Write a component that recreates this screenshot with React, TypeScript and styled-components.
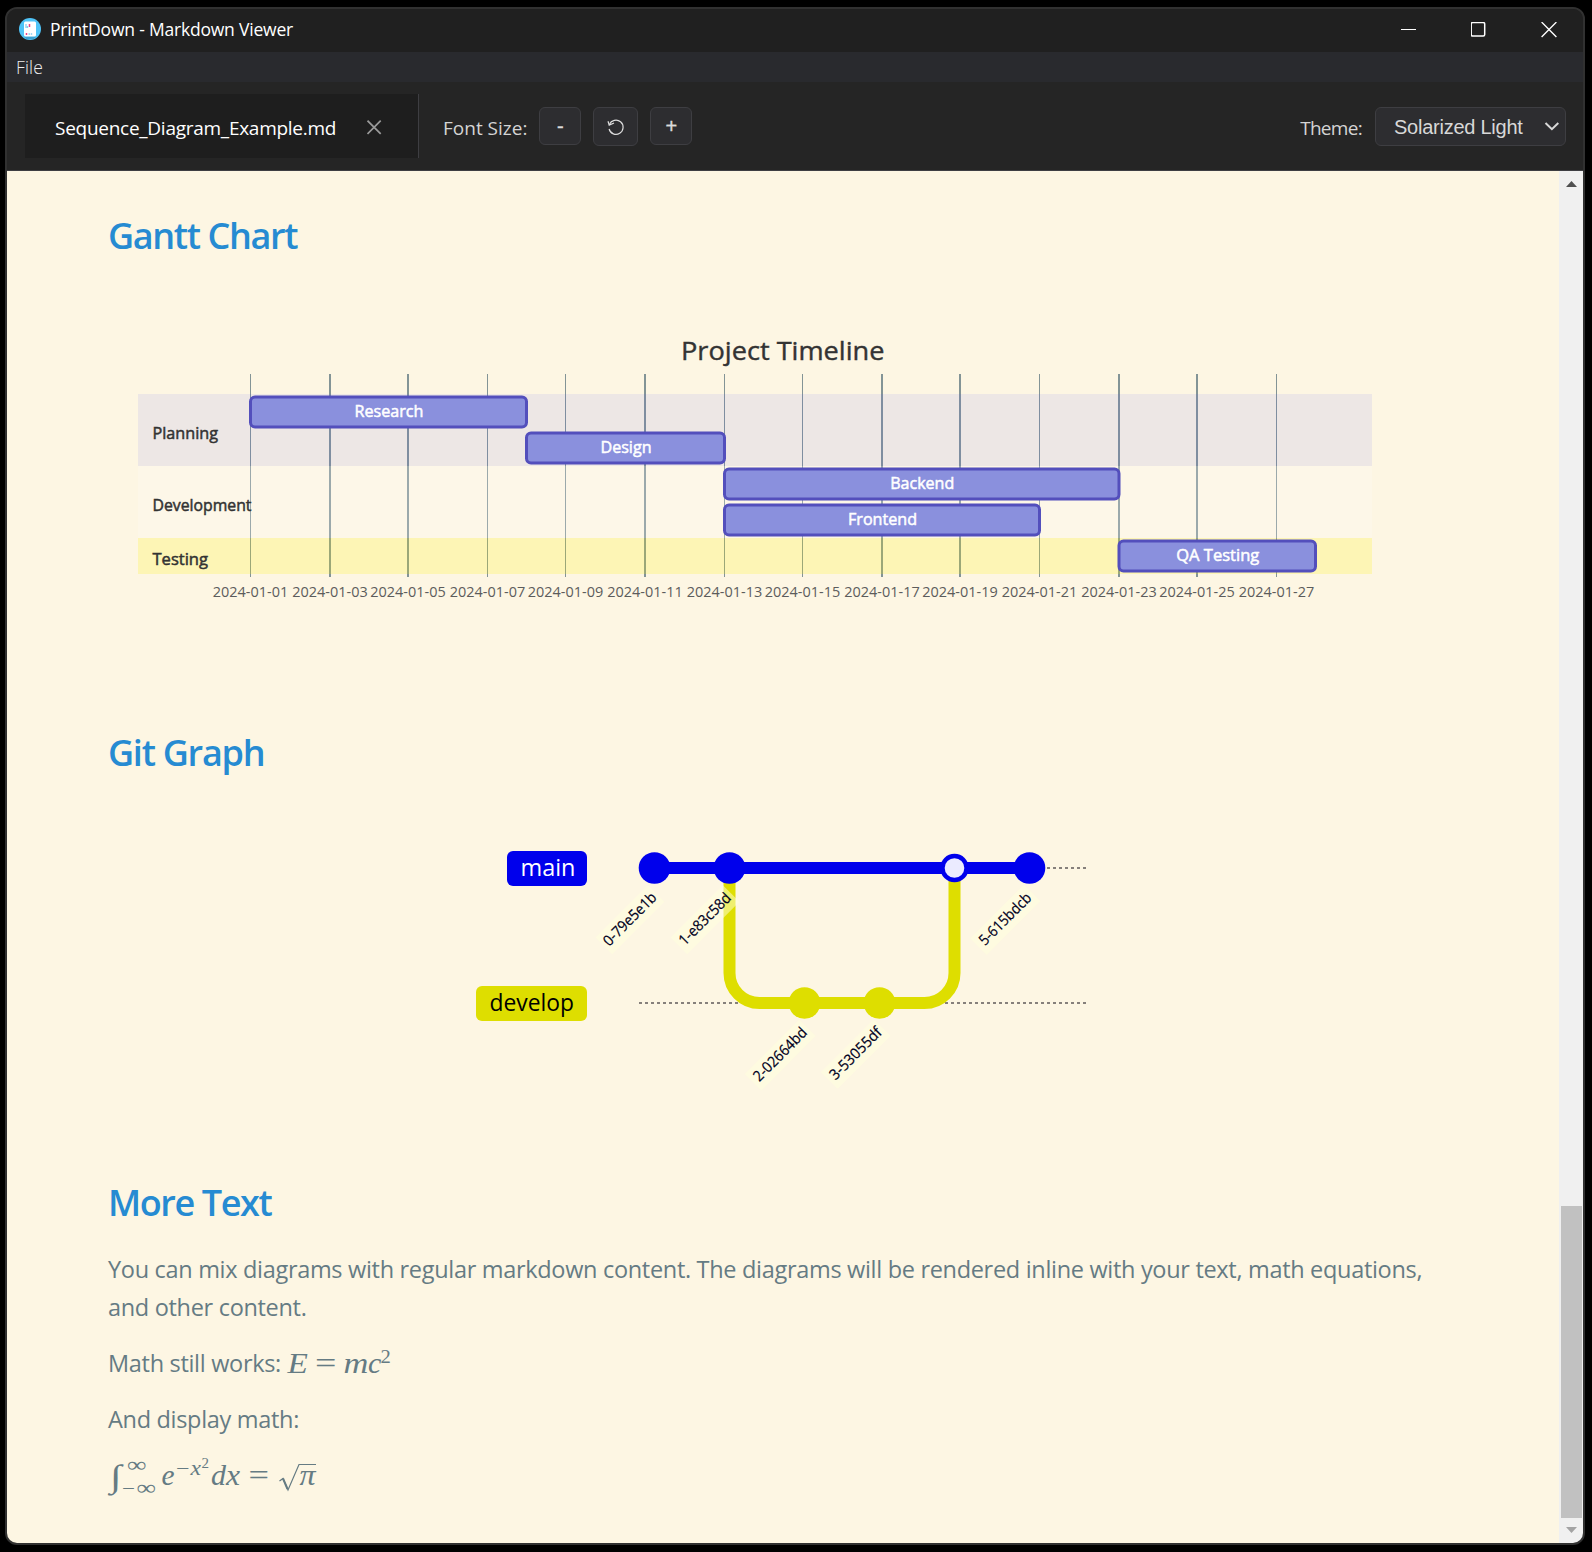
import React from 'react';
import styled, { createGlobalStyle } from 'styled-components';

const UI = '"Open Sans", "Noto Sans", sans-serif';
const MATH = '"Liberation Serif", serif';

const GlobalStyle = createGlobalStyle`
  * { box-sizing: border-box; }
  body { margin: 0; background: #000; font-family: ${UI}; }
`;

const Desktop = styled.div`
  width: 1592px;
  height: 1552px;
  padding: 7px 7px 7px 5px;
  background: #000;
  overflow: hidden;
`;

const AppWindow = styled.div`
  display: flex;
  flex-direction: column;
  width: 1580px;
  height: 1538px;
  border: 2px solid #313131;
  border-radius: 12px;
  overflow: hidden;
  background: #202020;
`;

const TitleBar = styled.header`
  display: flex;
  align-items: center;
  flex: none;
  height: 43px;
  padding: 0 26px 3px 12px;
  background: #202020;
`;

const AppTitle = styled.span`
  flex: 1;
  margin-left: 9px;
  color: #fff;
  font-size: 17.5px;
  line-height: 24px;
  letter-spacing: -0.2px;
`;

const WindowControls = styled.div`
  display: flex;
  align-items: center;
  gap: 54px;
  padding-top: 2px;
`;

const MenuBar = styled.nav`
  display: flex;
  align-items: center;
  flex: none;
  height: 30px;
  padding: 0 9px 1px;
  background: #292a2e;
`;

const MenuItem = styled.span`
  color: #eee;
  font-size: 17.5px;
  font-weight: 300;
  letter-spacing: 0.15px;
`;

const Toolbar = styled.div`
  display: flex;
  align-items: center;
  flex: none;
  height: 89px;
  padding: 0 17px 1px 18px;
  background: #252525;
  border-bottom: 1px solid #3e3e42;
`;

const Tab = styled.div`
  display: flex;
  align-items: center;
  width: 394px;
  height: 64px;
  padding-left: 30px;
  background: #1e1e1e;
  border-right: 1px solid #3e3e42;

  svg { margin-top: 3px; }
`;

const TabName = styled.span`
  width: 312px;
  padding-top: 4px;
  color: #fff;
  font-size: 19px;
  line-height: 26px;
  letter-spacing: -0.27px;
`;

const ToolLabel = styled.span<{ $tracking: number }>`
  padding-top: 4px;
  color: #d4d4d4;
  font-size: 19px;
  line-height: 26px;
  letter-spacing: ${(p) => p.$tracking}px;
`;

const FontControls = styled.div`
  display: flex;
  align-items: center;
  gap: 12px;
  flex: 1;
  margin-left: 24px;
`;

const ToolButton = styled.button<{ $width: number; $height: number }>`
  display: flex;
  align-items: center;
  justify-content: center;
  width: ${(p) => p.$width}px;
  height: ${(p) => p.$height}px;
  margin-top: ${(p) => p.$height - 38}px;
  padding: 2px 0 0;
  border: 1px solid #3e3e42;
  border-radius: 6px;
  background: #2d2d30;
  color: #dcdcdc;
  font: 500 20px "Liberation Sans", Arial, sans-serif;
  -webkit-text-stroke: 0.4px #dcdcdc;
`;

const ThemeControls = styled.div`
  display: flex;
  align-items: center;
  gap: 13px;
`;

const ThemeSelect = styled.div`
  display: flex;
  align-items: center;
  justify-content: space-between;
  width: 191px;
  height: 39px;
  margin-top: 1px;
  padding: 2px 6px 0 18px;
  border: 1px solid #3e3e42;
  border-radius: 6px;
  background: #2d2d30;
  color: #d8d8d8;
  font: 20px "Liberation Sans", Arial, sans-serif;
  letter-spacing: -0.25px;
`;

const Viewer = styled.div`
  display: flex;
  flex: 1;
  min-height: 0;
`;

const Page = styled.main`
  flex: 1;
  padding: 41px 0 0 101px;
  background: #fdf6e3;
  color: #657b83;
`;

const Heading = styled.h2<{ $tracking: number }>`
  margin: 0;
  color: #268bd2;
  font-size: 36px;
  font-weight: 600;
  line-height: 48px;
  letter-spacing: ${(p) => p.$tracking}px;
`;

const Diagram = styled.svg<{ $after: number }>`
  display: block;
  margin-bottom: ${(p) => p.$after}px;
  font-family: ${UI};
`;

const Paragraph = styled.p<{ $before: number }>`
  display: flex;
  width: 1330px;
  margin: ${(p) => p.$before}px 0 0;
  font-size: 23.5px;
  line-height: 38px;
  letter-spacing: -0.31px;
`;

const Formula = styled.svg`
  display: block;
  overflow: visible;
  fill: #657b83;
  font-family: ${MATH};
`;

const Scrollbar = styled.div`
  display: flex;
  flex-direction: column;
  align-items: center;
  width: 24px;
  padding: 10px 0;
  background: #f0f0f0;
`;

const Thumb = styled.div`
  width: 21px;
  height: 312px;
  margin: auto 0 9px;
  background: #c1c1c1;
`;

const ticks: [number, number][] = [
  [250, 1], [329, 2], [407, 2], [487, 1], [565, 1], [644, 2], [724, 1],
  [802, 1], [881, 2], [959, 2], [1039, 1], [1118, 2], [1196, 2], [1276, 1],
];

const sections = [
  { name: 'Planning', y: 394, h: 72, fill: 'rgba(102,102,255,0.1)', base: 438.5, w: 65.5 },
  { name: 'Development', y: 466, h: 72, fill: 'rgba(255,255,255,0.2)', base: 511, w: 99 },
  { name: 'Testing', y: 538, h: 36, fill: 'rgba(255,244,0,0.2)', base: 565, w: 55.5 },
];

const tasks = [
  { name: 'Research', x1: 250.5, x2: 526.5, y: 397, w: 69 },
  { name: 'Design', x1: 526.5, x2: 724.5, y: 433, w: 51 },
  { name: 'Backend', x1: 724.5, x2: 1119, y: 469, w: 64 },
  { name: 'Frontend', x1: 724.5, x2: 1039.5, y: 505, w: 69 },
  { name: 'QA Testing', x1: 1119, x2: 1315.5, y: 541, w: 83 },
];

function Gantt() {
  return (
    <Diagram $after={89} width={1400} height={380} viewBox="108 260 1400 380">
      <g fill="#839496">
        {ticks.map(([x, w]) => (
          <rect key={x} x={x} y={374} width={w} height={203} />
        ))}
      </g>
      {sections.map((s) => (
        <rect key={s.name} x={138} y={s.y} width={1234} height={s.h} fill={s.fill} />
      ))}
      {tasks.map((t) => (
        <g key={t.name}>
          <rect x={t.x1} y={t.y} width={t.x2 - t.x1} height={30} rx={4.5} fill="#8a90dd" stroke="#534fbc" strokeWidth={3} />
          <text x={(t.x1 + t.x2) / 2 + 0.5} y={t.y + 20} textAnchor="middle" textLength={t.w} lengthAdjust="spacingAndGlyphs" fill="#fff" stroke="#fff" strokeWidth={0.5} fontSize={16}>
            {t.name}
          </text>
        </g>
      ))}
      {sections.map((s) => (
        <text key={s.name} x={152.5} y={s.base} textLength={s.w} lengthAdjust="spacingAndGlyphs" fill="#333" stroke="#333" strokeWidth={0.5} fontSize={16}>
          {s.name}
        </text>
      ))}
      {ticks.map(([x, w], i) => (
        <text key={x} x={x + w / 2} y={596.5} textAnchor="middle" textLength={75.5} lengthAdjust="spacingAndGlyphs" fill="#5c5c5c" fontSize={14.8}>
          {`2024-01-${String(i * 2 + 1).padStart(2, '0')}`}
        </text>
      ))}
      <text x={681} y={360} textLength={203.5} lengthAdjust="spacingAndGlyphs" fill="#333" stroke="#333" strokeWidth={0.4} fontSize={26}>Project Timeline</text>
    </Diagram>
  );
}

const commits = [
  { id: '0-79e5e1b', x: 630, y: 919.7, w: 74, t: 68.5 },
  { id: '1-e83c58d', x: 705, y: 919.7, w: 74, t: 67 },
  { id: '2-02664bd', x: 780.3, y: 1055, w: 77, t: 69 },
  { id: '3-53055df', x: 855.7, y: 1054, w: 75, t: 67 },
  { id: '5-615bdcb', x: 1005.3, y: 919.7, w: 76, t: 67 },
];

function GitGraph() {
  return (
    <Diagram $after={64} width={1400} height={338} viewBox="108 777 1400 338">
      <g stroke="#5f5a5a" strokeWidth={1.5} strokeDasharray="3">
        <line x1={639} x2={1087} y1={868} y2={868} />
        <line x1={639} x2={1087} y1={1003} y2={1003} />
      </g>
      <rect x={507} y={851} width={80} height={35} rx={6} fill="#0000ec" />
      <text x={520.5} y={876} textLength={55} lengthAdjust="spacingAndGlyphs" fill="#fff" fontSize={23.5}>main</text>
      <rect x={476} y={986} width={111} height={35} rx={6} fill="#dede00" />
      <text x={489.5} y={1011} textLength={84.5} lengthAdjust="spacingAndGlyphs" fill="#000" fontSize={23.5}>develop</text>
      <g fill="none" strokeWidth={12}>
        <path stroke="#dede00" d="M729.5 868V973A30 30 0 0 0 759.5 1003H924.5A30 30 0 0 0 954.5 973V868" />
        <path stroke="#0000ec" d="M654.5 868H1029.5" />
      </g>
      <g fill="#0000ec">
        <circle cx={654.5} cy={868} r={15.8} />
        <circle cx={729.5} cy={868} r={15.8} />
        <circle cx={954.5} cy={868} r={14.3} />
        <circle cx={1029.5} cy={868} r={15.8} />
      </g>
      <circle cx={954.5} cy={868} r={9.8} fill="#ebebff" />
      <g fill="#dede00">
        <circle cx={804.5} cy={1003} r={15.8} />
        <circle cx={879.5} cy={1003} r={15.8} />
      </g>
      {commits.map((c) => (
        <g key={c.id} transform={`translate(${c.x} ${c.y}) rotate(-45)`}>
          <rect x={-c.w / 2} y={-11.75} width={c.w} height={23.5} fill="rgba(255,255,222,0.5)" />
          <text x={0.3} y={4.5} textAnchor="middle" textLength={c.t} lengthAdjust="spacingAndGlyphs" fill="#000021" stroke="#000021" strokeWidth={0.2} fontSize={15}>{c.id}</text>
        </g>
      ))}
    </Diagram>
  );
}

interface GlyphProps {
  x: number;
  y: number;
  w: number;
  size?: number;
  roman?: boolean;
  children: string;
}

function Glyph({ x, y, w, size = 29, roman, children }: GlyphProps) {
  return (
    <text x={x} y={y} fontSize={size} fontStyle={roman ? 'normal' : 'italic'} textLength={w} lengthAdjust="spacingAndGlyphs">
      {children}
    </text>
  );
}

export default function App() {
  return (
    <>
      <GlobalStyle />
      <Desktop>
        <AppWindow>
          <TitleBar>
            <svg width="22" height="22" viewBox="0 0 22 22">
              <circle cx="11" cy="11" r="11" fill="#4fc3f7" />
              <path d="M4.5 18.5h13l-3 2.7h-7z" fill="#3b9fd0" />
              <rect x="5" y="3.5" width="12" height="15" rx="1.5" fill="#fff" />
              <path d="M7 6v4M8.500 8v2" stroke="#8bcdf0" strokeWidth="1.3" />
              <path d="M10.500 6v3M7.500 15v2" stroke="#ec3f86" strokeWidth="1.5" />
              <path d="M9.500 16h4" stroke="#8bcdf0" strokeWidth="1.5" strokeDasharray="1.5 .7" />
            </svg>
            <AppTitle>PrintDown - Markdown Viewer</AppTitle>
            <WindowControls>
              <svg width="16" height="16" viewBox="0 0 16 16"><path d="M0 7.500h15" stroke="#fff" /></svg>
              <svg width="16" height="16" viewBox="0 0 16 16"><rect x="0" y="0.500" width="13.500" height="13.500" rx="1.500" fill="none" stroke="#fff" strokeWidth="1.500" transform="translate(0.200 0)" /></svg>
              <svg width="16" height="16" viewBox="0 0 16 16"><path d="M.6.1l14.800 14.800M15.400.1L.6 14.900" stroke="#fff" strokeWidth="1.400" /></svg>
            </WindowControls>
          </TitleBar>
          <MenuBar><MenuItem>File</MenuItem></MenuBar>
          <Toolbar>
            <Tab>
              <TabName>Sequence_Diagram_Example.md</TabName>
              <svg width="15" height="15" viewBox="0 0 15 15"><path d="M.5 .7l13.200 13.200M13.700 .7L.5 13.900" stroke="#9a9a9a" strokeWidth="1.700" /></svg>
            </Tab>
            <FontControls>
              <ToolLabel $tracking={0}>Font Size:</ToolLabel>
              <ToolButton $width={42} $height={38}>-</ToolButton>
              <ToolButton $width={45} $height={39}>
                <svg width="18" height="18" viewBox="0 0 18 18" fill="none" stroke="#dcdcdc" strokeWidth="1.200">
                  <path d="M2.400 6.600A7.100 7.100 0 1 1 2.100 11" />
                  <path d="M1 3.300L2.200 7.100L7 5" />
                </svg>
              </ToolButton>
              <ToolButton $width={42} $height={38}>+</ToolButton>
            </FontControls>
            <ThemeControls>
              <ToolLabel $tracking={-0.7}>Theme:</ToolLabel>
              <ThemeSelect>
                Solarized Light
                <svg width="15" height="10" viewBox="0 0 15 10"><path d="M1.500 1L7.900 7.200L14.300 1" fill="none" stroke="#d8d8d8" strokeWidth="2" /></svg>
              </ThemeSelect>
            </ThemeControls>
          </Toolbar>
          <Viewer>
            <Page>
              <Heading $tracking={-1.35}>Gantt Chart</Heading>
              <Gantt />
              <Heading $tracking={-1.25}>Git Graph</Heading>
              <GitGraph />
              <Heading $tracking={-1.4}>More Text</Heading>
              <Paragraph $before={23}>
                You can mix diagrams with regular markdown content. The diagrams will be rendered inline with your text, math equations, and other content.
              </Paragraph>
              <Paragraph $before={18}>
                Math still works:
                <Formula width="110" height="38" viewBox="282 1343 110 38">
                  <Glyph x={288.500} y={1371.500} w={20}>E</Glyph>
                  <Glyph x={316} y={1371.500} w={21} roman>=</Glyph>
                  <Glyph x={344.500} y={1371.500} w={24.500}>m</Glyph>
                  <Glyph x={369} y={1371.500} w={13}>c</Glyph>
                  <Glyph x={381.500} y={1361.700} w={10} size={19.500} roman>2</Glyph>
                </Formula>
              </Paragraph>
              <Paragraph $before={18}>And display math:</Paragraph>
              <Formula width="220" height="60" viewBox="108 1438 220 60">
                <Glyph x={110} y={1486.500} w={11.500} size={32}>∫</Glyph>
                <Glyph x={127} y={1471.500} w={19.500} size={22} roman>∞</Glyph>
                <Glyph x={122} y={1494.500} w={13} size={20} roman>−</Glyph>
                <Glyph x={136.500} y={1494.500} w={19.500} size={22} roman>∞</Glyph>
                <Glyph x={161.500} y={1484.700} w={13}>e</Glyph>
                <Glyph x={176} y={1475.300} w={13.500} size={20} roman>−</Glyph>
                <Glyph x={190.500} y={1475} w={10.500} size={20}>x</Glyph>
                <Glyph x={201.500} y={1467.700} w={7.500} size={14} roman>2</Glyph>
                <Glyph x={211} y={1484.700} w={15}>d</Glyph>
                <Glyph x={226} y={1484.700} w={14}>x</Glyph>
                <Glyph x={248.500} y={1484.700} w={20.500} roman>=</Glyph>
                <path d="M279.500 1481l3.500-2.500 5 11.500 11-25.500H316" fill="none" stroke="#657b83" strokeWidth="1.200" />
                <path d="M283 1478.500l4.500 10.500" stroke="#657b83" strokeWidth="2" />
                <Glyph x={299.500} y={1484.700} w={16}>π</Glyph>
              </Formula>
            </Page>
            <Scrollbar>
              <svg width="11" height="6" viewBox="0 0 11 6"><path d="M0 6L5.500 0L11 6z" fill="#505050" /></svg>
              <Thumb />
              <svg width="11" height="6" viewBox="0 0 11 6"><path d="M0 0L5.500 6L11 0z" fill="#a3a3a3" /></svg>
            </Scrollbar>
          </Viewer>
        </AppWindow>
      </Desktop>
    </>
  );
}
